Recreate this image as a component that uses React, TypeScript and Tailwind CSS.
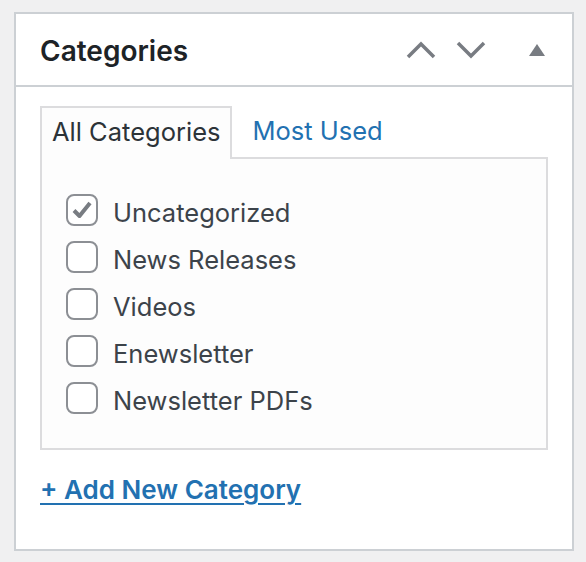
import React, { useState } from 'react';

const categories = ['Uncategorized', 'News Releases', 'Videos', 'Enewsletter', 'Newsletter PDFs'];

const ChevronUp = () => (
  <svg width="30" height="18" viewBox="0 0 30 18" fill="none">
    <path d="M2 16 L15 3 L28 16" stroke="#787c82" strokeWidth="3.5" />
  </svg>
);

const ChevronDown = () => (
  <svg width="30" height="18" viewBox="0 0 30 18" fill="none">
    <path d="M2 2 L15 15 L28 2" stroke="#787c82" strokeWidth="3.5" />
  </svg>
);

const Triangle = () => (
  <svg width="18" height="14" viewBox="0 0 18 14">
    <path d="M9 1 L17 13 L1 13 Z" fill="#787c82" />
  </svg>
);

const Checkbox: React.FC<{ checked: boolean; onToggle: () => void }> = ({ checked, onToggle }) => (
  <button
    onClick={onToggle}
    className="w-[32px] h-[32px] shrink-0 rounded-[8px] border-2 border-[#8c8f94] bg-white flex items-center justify-center"
  >
    {checked && (
      <svg width="26" height="26" viewBox="0 0 26 26" fill="none">
        <path d="M5 13.5 L10.5 19 L21 6" stroke="#787c82" strokeWidth="4" strokeLinejoin="round" />
      </svg>
    )}
  </button>
);

export default function App() {
  const [tab, setTab] = useState<'all' | 'used'>('all');
  const [checked, setChecked] = useState<Record<string, boolean>>({ Uncategorized: true });

  return (
    <div
      className="w-full h-[562px] bg-[#f0f0f1] pt-[12px] pl-[14px]"
      style={{ fontFamily: 'Inter, Roboto, "Liberation Sans", sans-serif' }}
    >
      <div className="w-[560px] h-[539px] bg-white border-2 border-[#ccd0d4]">
        {/* Header */}
        <div className="h-[73px] border-b-2 border-[#ccd0d4] flex items-center pl-[24px] pr-[26px]">
          <h2 className="flex-1 text-[28px] font-semibold text-[#1d2327] pt-[2px]">Categories</h2>
          <div className="flex items-center">
            <span className="w-[50px] flex justify-center"><ChevronUp /></span>
            <span className="w-[50px] flex justify-center"><ChevronDown /></span>
            <span className="w-[50px] flex justify-end"><Triangle /></span>
          </div>
        </div>

        {/* Body */}
        <div className="px-[24px] pt-[19px]">
          <div className="flex items-end text-[25.5px]">
            <button
              onClick={() => setTab('all')}
              className={`h-[53px] px-[10px] pb-[3px] -mb-[2px] relative ${
                tab === 'all'
                  ? 'border-2 border-b-0 border-[#dcdcde] bg-[#fdfdfd] text-[#2c3338]'
                  : 'text-[#2271b1]'
              }`}
            >
              All Categories
            </button>
            <button
              onClick={() => setTab('used')}
              className={`h-[53px] px-[20px] pb-[3px] -mb-[2px] relative ${
                tab === 'used'
                  ? 'border-2 border-b-0 border-[#dcdcde] bg-[#fdfdfd] text-[#2c3338]'
                  : 'text-[#2271b1]'
              }`}
            >
              Most Used
            </button>
          </div>
          <div className="border-2 border-[#dcdcde] bg-[#fdfdfd] pt-[27px] pb-[27px] pl-[24px]">
            {categories.map((c) => (
              <div key={c} className="h-[47px] flex items-center gap-[15px]">
                <Checkbox
                  checked={!!checked[c]}
                  onToggle={() => setChecked({ ...checked, [c]: !checked[c] })}
                />
                <span className="text-[25.5px] text-[#3c434a] pt-[7px]">{c}</span>
              </div>
            ))}
          </div>
          <a href="#" className="inline-block mt-[20px] text-[26px] font-semibold text-[#2271b1] underline underline-offset-[4px]">
            + Add New Category
          </a>
        </div>
      </div>
    </div>
  );
}
